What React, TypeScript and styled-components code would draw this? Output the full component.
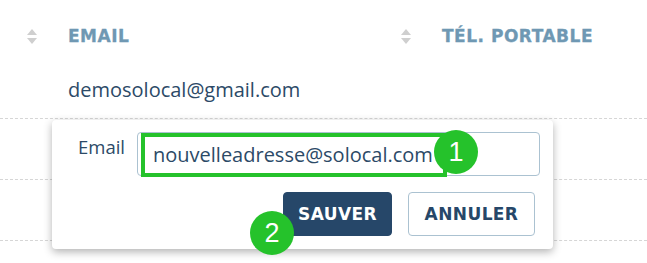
import React, { useState } from "react";
import styled, { createGlobalStyle } from "styled-components";

const GlobalStyle = createGlobalStyle`
  html, body {
    margin: 0;
    padding: 0;
    background: #ffffff;
  }
  body {
    font-family: "Open Sans", "Liberation Sans", sans-serif;
  }
`;

const Color = {
  Header: "#6f98b3",
  Text: "#2c4a67",
  Primary: "#264769",
  Border: "#abc2d1",
  Dash: "#d6d6d6",
  Sort: "#cfcfcf",
  Badge: "#25c22b",
};

const Table = styled.div`
  position: relative;
  width: 647px;
  height: 263px;
  overflow: hidden;
`;

const HeaderRow = styled.div`
  display: grid;
  grid-template-columns: 374px 1fr;
  align-items: center;
  height: 58px;
  padding: 14px 0 0 27px;
  box-sizing: border-box;
`;

const HeaderCell = styled.div`
  display: flex;
  align-items: center;
  gap: 31px;
`;

const HeaderLabel = styled.span`
  font-family: "DejaVu Sans", "Liberation Sans", sans-serif;
  font-weight: 700;
  font-size: 17px;
  letter-spacing: 0.5px;
  color: ${Color.Header};
  -webkit-text-stroke: 0.3px ${Color.Header};
`;

const Row = styled.div`
  display: grid;
  grid-template-columns: 374px 1fr;
  align-items: center;
  height: 61px;
  padding-left: 68px;
  box-sizing: border-box;
  border-bottom: 1px dashed ${Color.Dash};
`;

const Cell = styled.div`
  font-size: 20px;
  color: ${Color.Text};
  padding-top: 2px;
`;

const SortIcon = () => (
  <svg width="10" height="15" viewBox="0 0 10 15">
    <path d="M5 0 L10 6 H0 Z" fill={Color.Sort} />
    <path d="M5 15 L10 9 H0 Z" fill={Color.Sort} />
  </svg>
);

const Popover = styled.div`
  position: absolute;
  left: 52px;
  top: 120px;
  width: 501px;
  height: 129px;
  box-sizing: border-box;
  padding: 12px 13px 13px 26px;
  background: #ffffff;
  border-radius: 4px;
  box-shadow: 0 3px 9px rgba(0, 0, 0, 0.3);
  display: flex;
  flex-direction: column;
  gap: 16px;
`;

const Field = styled.div`
  display: flex;
  align-items: flex-start;
  gap: 11px;
`;

const Label = styled.label`
  font-size: 18.5px;
  color: ${Color.Text};
  padding-top: 2px;
  width: 48px;
`;

const InputWrap = styled.div`
  position: relative;
  flex: 1;
`;

const Input = styled.input`
  display: block;
  width: 100%;
  height: 44px;
  box-sizing: border-box;
  border: 1px solid ${Color.Border};
  border-radius: 4px;
  padding: 0 0 0 15px;
  font-family: "Open Sans", "Liberation Sans", sans-serif;
  font-size: 20px;
  color: ${Color.Text};
  outline: none;
`;

const Highlight = styled.div`
  position: absolute;
  left: 4px;
  top: 1px;
  width: 306px;
  height: 44px;
  box-sizing: border-box;
  border: 4px solid ${Color.Badge};
  pointer-events: none;
`;

const Actions = styled.div`
  position: relative;
  display: flex;
  justify-content: flex-end;
  gap: 16px;
  margin-right: 5px;
`;

const Button = styled.button<{ $primary?: boolean }>`
  height: 44px;
  padding: 0;
  width: ${(p) => (p.$primary ? "109px" : "127px")};
  box-sizing: border-box;
  border-radius: 4px;
  border: 1px solid ${(p) => (p.$primary ? Color.Primary : Color.Border)};
  background: ${(p) => (p.$primary ? Color.Primary : "#ffffff")};
  color: ${(p) => (p.$primary ? "#ffffff" : Color.Primary)};
  font-family: "DejaVu Sans", "Liberation Sans", sans-serif;
  font-weight: 700;
  font-size: 17px;
  letter-spacing: 0.4px;
  cursor: pointer;
`;

const Badge = styled.div<{ $left: number; $top: number }>`
  position: absolute;
  left: ${(p) => p.$left}px;
  top: ${(p) => p.$top}px;
  width: 44px;
  height: 44px;
  border-radius: 50%;
  background: ${Color.Badge};
  color: #ffffff;
  display: flex;
  align-items: center;
  justify-content: center;
  font-family: "Liberation Sans", Arial, sans-serif;
  font-size: 27px;
  line-height: 1;
`;

const App = () => {
  const [email, setEmail] = useState("nouvelleadresse@solocal.com");

  return (
    <>
      <GlobalStyle />
      <Table>
        <HeaderRow>
          <HeaderCell>
            <SortIcon />
            <HeaderLabel>EMAIL</HeaderLabel>
          </HeaderCell>
          <HeaderCell>
            <SortIcon />
            <HeaderLabel>TÉL. PORTABLE</HeaderLabel>
          </HeaderCell>
        </HeaderRow>
        <Row>
          <Cell>demosolocal@gmail.com</Cell>
          <Cell />
        </Row>
        <Row />
        <Row />

        <Popover>
          <Field>
            <Label>Email</Label>
            <InputWrap>
              <Input value={email} onChange={(e) => setEmail(e.target.value)} />
              <Highlight />
            </InputWrap>
          </Field>
          <Actions>
            <Button $primary>SAUVER</Button>
            <Button>ANNULER</Button>
          </Actions>
        </Popover>

        <Badge $left={434} $top={130}>1</Badge>
        <Badge $left={250} $top={211}>2</Badge>
      </Table>
    </>
  );
};

export default App;
